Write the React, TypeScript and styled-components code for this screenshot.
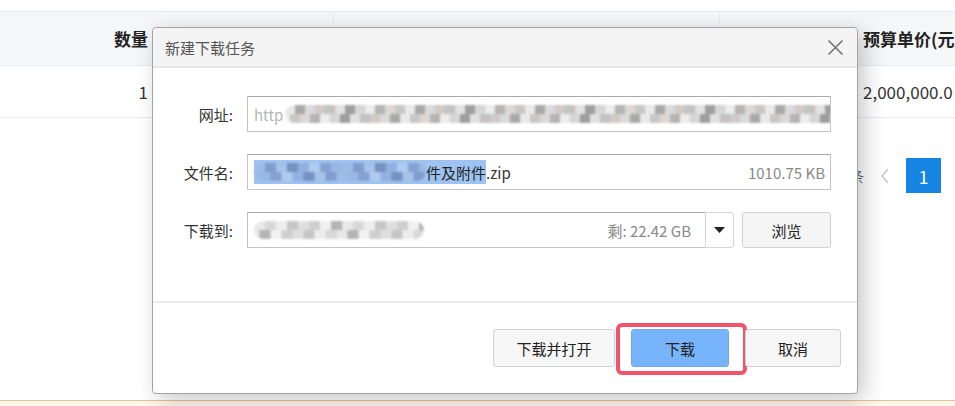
import styled, { createGlobalStyle } from 'styled-components'

const GlobalStyle = createGlobalStyle`
  html, body {
    margin: 0;
    padding: 0;
    background: #ffffff;
    font-family: "Noto Sans CJK SC", "Noto Sans", "Liberation Sans", sans-serif;
  }
`

const urlTiles = ['#e6e6e6', '#9a9a9a', '#d4d4d4', '#c9c1bb', '#b9b9b9', '#dcdcdc', '#8e8e8e', '#cfcfcf', '#e9e9e9', '#a8a8a8', '#d8d2cc', '#bfbfbf']
const nameTiles = ['#9cbce6', '#7b97c8', '#a7c3ea', '#6f89b9', '#8fb0df', '#b4cdf0', '#7f9dcc', '#98b6e2']
const pathTiles = ['#e4e4e4', '#d2d2d2', '#ebebeb', '#bdbdbd', '#dadada', '#c7c7c7', '#efefef', '#a8a8a8']

const tileGradient = (tiles: string[], size: number) =>
  `linear-gradient(90deg, ${tiles
    .map((c, i) => `${c} ${i * size}px ${(i + 1) * size}px`)
    .join(', ')})`

const App = () => {
  return (
    <>
      <GlobalStyle />
      <Page>
        <Table>
          <HeaderRow>
            <Cell $align="right">数量</Cell>
            <Cell $divider />
            <Cell $divider />
            <Cell />
            <Cell>预算单价(元</Cell>
          </HeaderRow>
          <DataRow>
            <Cell $align="right">1</Cell>
            <Cell />
            <Cell />
            <Cell />
            <Cell>2,000,000.0</Cell>
          </DataRow>
        </Table>

        <Pager>
          <Total>共 1 条</Total>
          <PrevArrow width="10" height="16" viewBox="0 0 10 16">
            <path d="M8 1 L2 8 L8 15" fill="none" stroke="#c4c4c4" strokeWidth="1.4" />
          </PrevArrow>
          <PageBox>1</PageBox>
        </Pager>

        <BottomBar />

        <Dialog>
          <TitleBar>
            <Title>新建下载任务</Title>
            <CloseIcon width="17" height="17" viewBox="0 0 17 17">
              <path d="M1.5 1.5 L15.5 15.5 M15.5 1.5 L1.5 15.5" stroke="#6f6f6f" strokeWidth="1.5" />
            </CloseIcon>
          </TitleBar>

          <Body>
            <FormRow>
              <Label>网址:</Label>
              <Field>
                <Hint>http</Hint>
                <Mosaic $tiles={urlTiles} $size={10} $width={560} />
              </Field>
            </FormRow>

            <FormRow>
              <Label>文件名:</Label>
              <Field>
                <Selected>
                  <Mosaic $tiles={nameTiles} $size={11} $width={172} />
                  <span>件及附件</span>
                </Selected>
                <FileExt>.zip</FileExt>
                <SideInfo>1010.75 KB</SideInfo>
              </Field>
            </FormRow>

            <FormRow>
              <Label>下载到:</Label>
              <PathGroup>
                <Field $narrow>
                  <Mosaic $tiles={pathTiles} $size={11} $width={170} />
                  <SideInfo>剩: 22.42 GB</SideInfo>
                </Field>
                <DropButton>
                  <svg width="11" height="6" viewBox="0 0 11 6">
                    <path d="M0 0 L11 0 L5.5 6 Z" fill="#222" />
                  </svg>
                </DropButton>
              </PathGroup>
              <BrowseButton>浏览</BrowseButton>
            </FormRow>
          </Body>

          <Footer>
            <ActionButton>下载并打开</ActionButton>
            <ActionButton $primary $width={98}>
              下载
              <Highlight />
            </ActionButton>
            <ActionButton $width={96}>取消</ActionButton>
          </Footer>
        </Dialog>
      </Page>
    </>
  )
}

const Page = styled.div`
  position: relative;
  height: 406px;
  overflow: hidden;
  display: flex;
  flex-direction: column;
  padding-top: 11px;
  box-sizing: border-box;
`

const Table = styled.div`
  display: flex;
  flex-direction: column;
`

const columns = '156px 178px 386px 135px 1fr'

const HeaderRow = styled.div`
  display: grid;
  grid-template-columns: ${columns};
  height: 53px;
  background: #f5f6f8;
  border-top: 1px solid #e7ebf2;
  border-bottom: 1px solid #e7ebf2;
  font-weight: 700;
  color: #222;
`

const DataRow = styled.div`
  display: grid;
  grid-template-columns: ${columns};
  height: 51px;
  border-bottom: 1px solid #e7ebf2;
  color: #333;
`

const Cell = styled.div<{ $align?: 'right'; $divider?: boolean }>`
  display: flex;
  align-items: center;
  justify-content: ${(p) => (p.$align === 'right' ? 'flex-end' : 'flex-start')};
  padding: 0 8px;
  font-size: 17px;
  white-space: nowrap;
  overflow: hidden;
  border-right: ${(p) => (p.$divider ? '1px solid #e7ebf2' : 'none')};
`

const Pager = styled.div`
  display: flex;
  align-items: center;
  justify-content: flex-end;
  gap: 16px;
  margin-top: 40px;
  padding-right: 14px;
`

const Total = styled.span`
  font-size: 14px;
  color: #666;
`

const PrevArrow = styled.svg`
  display: block;
`

const PageBox = styled.div`
  width: 35px;
  height: 35px;
  background: #1584e2;
  color: #fff;
  font-size: 18px;
  display: flex;
  align-items: center;
  justify-content: center;
`

const BottomBar = styled.div`
  margin-top: auto;
  height: 5px;
  border-top: 1px solid #efc08c;
  background: #fdf7ee;
`

const Dialog = styled.div`
  position: absolute;
  left: 152px;
  top: 27px;
  width: 706px;
  height: 367px;
  box-sizing: border-box;
  background: #fff;
  border: 1px solid #a3a3a3;
  border-radius: 4px;
  box-shadow: 6px 6px 22px rgba(0, 0, 0, 0.22);
  display: flex;
  flex-direction: column;
`

const TitleBar = styled.div`
  height: 38px;
  display: flex;
  align-items: center;
  justify-content: space-between;
  padding: 0 13px 0 12px;
  background: #f4f4f4;
  border-bottom: 2px solid #e6e6e6;
  border-radius: 4px 4px 0 0;
`

const Title = styled.span`
  font-size: 15px;
  color: #555;
`

const CloseIcon = styled.svg`
  display: block;
`

const Body = styled.div`
  height: 235px;
  box-sizing: border-box;
  padding: 27px 26px 0 0;
  display: flex;
  flex-direction: column;
  gap: 20px;
  border-bottom: 2px solid #ebebeb;
`

const FormRow = styled.div`
  display: flex;
  align-items: center;
  height: 38px;
`

const Label = styled.div`
  width: 80px;
  margin-right: 14px;
  text-align: right;
  font-size: 15px;
  color: #333;
  flex-shrink: 0;
`

const Field = styled.div<{ $narrow?: boolean }>`
  flex: 1;
  height: 36px;
  box-sizing: border-box;
  border: 1px solid #c4c4c4;
  border-top-color: #a9a9a9;
  background: #fff;
  display: flex;
  align-items: center;
  padding: 0 5px 0 6px;
  font-size: 15px;
  color: #333;
  overflow: hidden;
  white-space: nowrap;
  ${(p) => (p.$narrow ? 'border-right: none; padding-right: 14px;' : '')}
`

const Hint = styled.span`
  color: #b5b5b5;
  margin-right: 2px;
`

const Mosaic = styled.span<{ $tiles: string[]; $size: number; $width: number }>`
  display: inline-block;
  flex-shrink: 0;
  width: ${(p) => p.$width}px;
  height: 18px;
  border-radius: 9px;
  background-image: ${(p) => tileGradient(p.$tiles, p.$size)},
    ${(p) => tileGradient([...p.$tiles].reverse(), p.$size)};
  background-size: ${(p) => p.$tiles.length * p.$size}px 9px;
  background-position: 0 0, ${(p) => p.$size / 2}px 9px;
  background-repeat: repeat-x;
  opacity: 0.85;
  filter: blur(1.1px);
`

const Selected = styled.span`
  display: inline-flex;
  align-items: center;
  height: 24px;
  background: #9ec3f1;
  color: #222;
`

const FileExt = styled.span`
  color: #333;
`

const SideInfo = styled.span`
  margin-left: auto;
  color: #888;
  font-size: 15px;
`

const PathGroup = styled.div`
  flex: 1;
  display: flex;
  align-items: center;
`

const DropButton = styled.div`
  width: 29px;
  height: 36px;
  box-sizing: border-box;
  border: 1px solid #d6d6d6;
  border-radius: 0 3px 3px 0;
  display: flex;
  align-items: center;
  justify-content: center;
  background: #fff;
`

const BrowseButton = styled.div`
  width: 89px;
  height: 36px;
  margin-left: 8px;
  box-sizing: border-box;
  border: 1px solid #d2d2d2;
  border-radius: 3px;
  background: #f5f5f5;
  display: flex;
  align-items: center;
  justify-content: center;
  font-size: 15px;
  color: #222;
`

const Footer = styled.div`
  flex: 1;
  display: flex;
  align-items: flex-start;
  justify-content: flex-end;
  gap: 16px;
  padding: 26px 16px 0 0;
`

const ActionButton = styled.div<{ $primary?: boolean; $width?: number }>`
  position: relative;
  width: ${(p) => p.$width ?? 122}px;
  height: 38px;
  box-sizing: border-box;
  border: 1px solid ${(p) => (p.$primary ? '#6eaaf2' : '#d2d2d2')};
  border-radius: 3px;
  background: ${(p) => (p.$primary ? '#78b4fb' : '#f6f6f6')};
  display: flex;
  align-items: center;
  justify-content: center;
  font-size: 15px;
  color: #222;
`

const Highlight = styled.span`
  position: absolute;
  left: -16px;
  right: -19px;
  top: -7px;
  bottom: -9px;
  border: 4px solid #f2526c;
  border-radius: 6px;
  pointer-events: none;
`

export default App
